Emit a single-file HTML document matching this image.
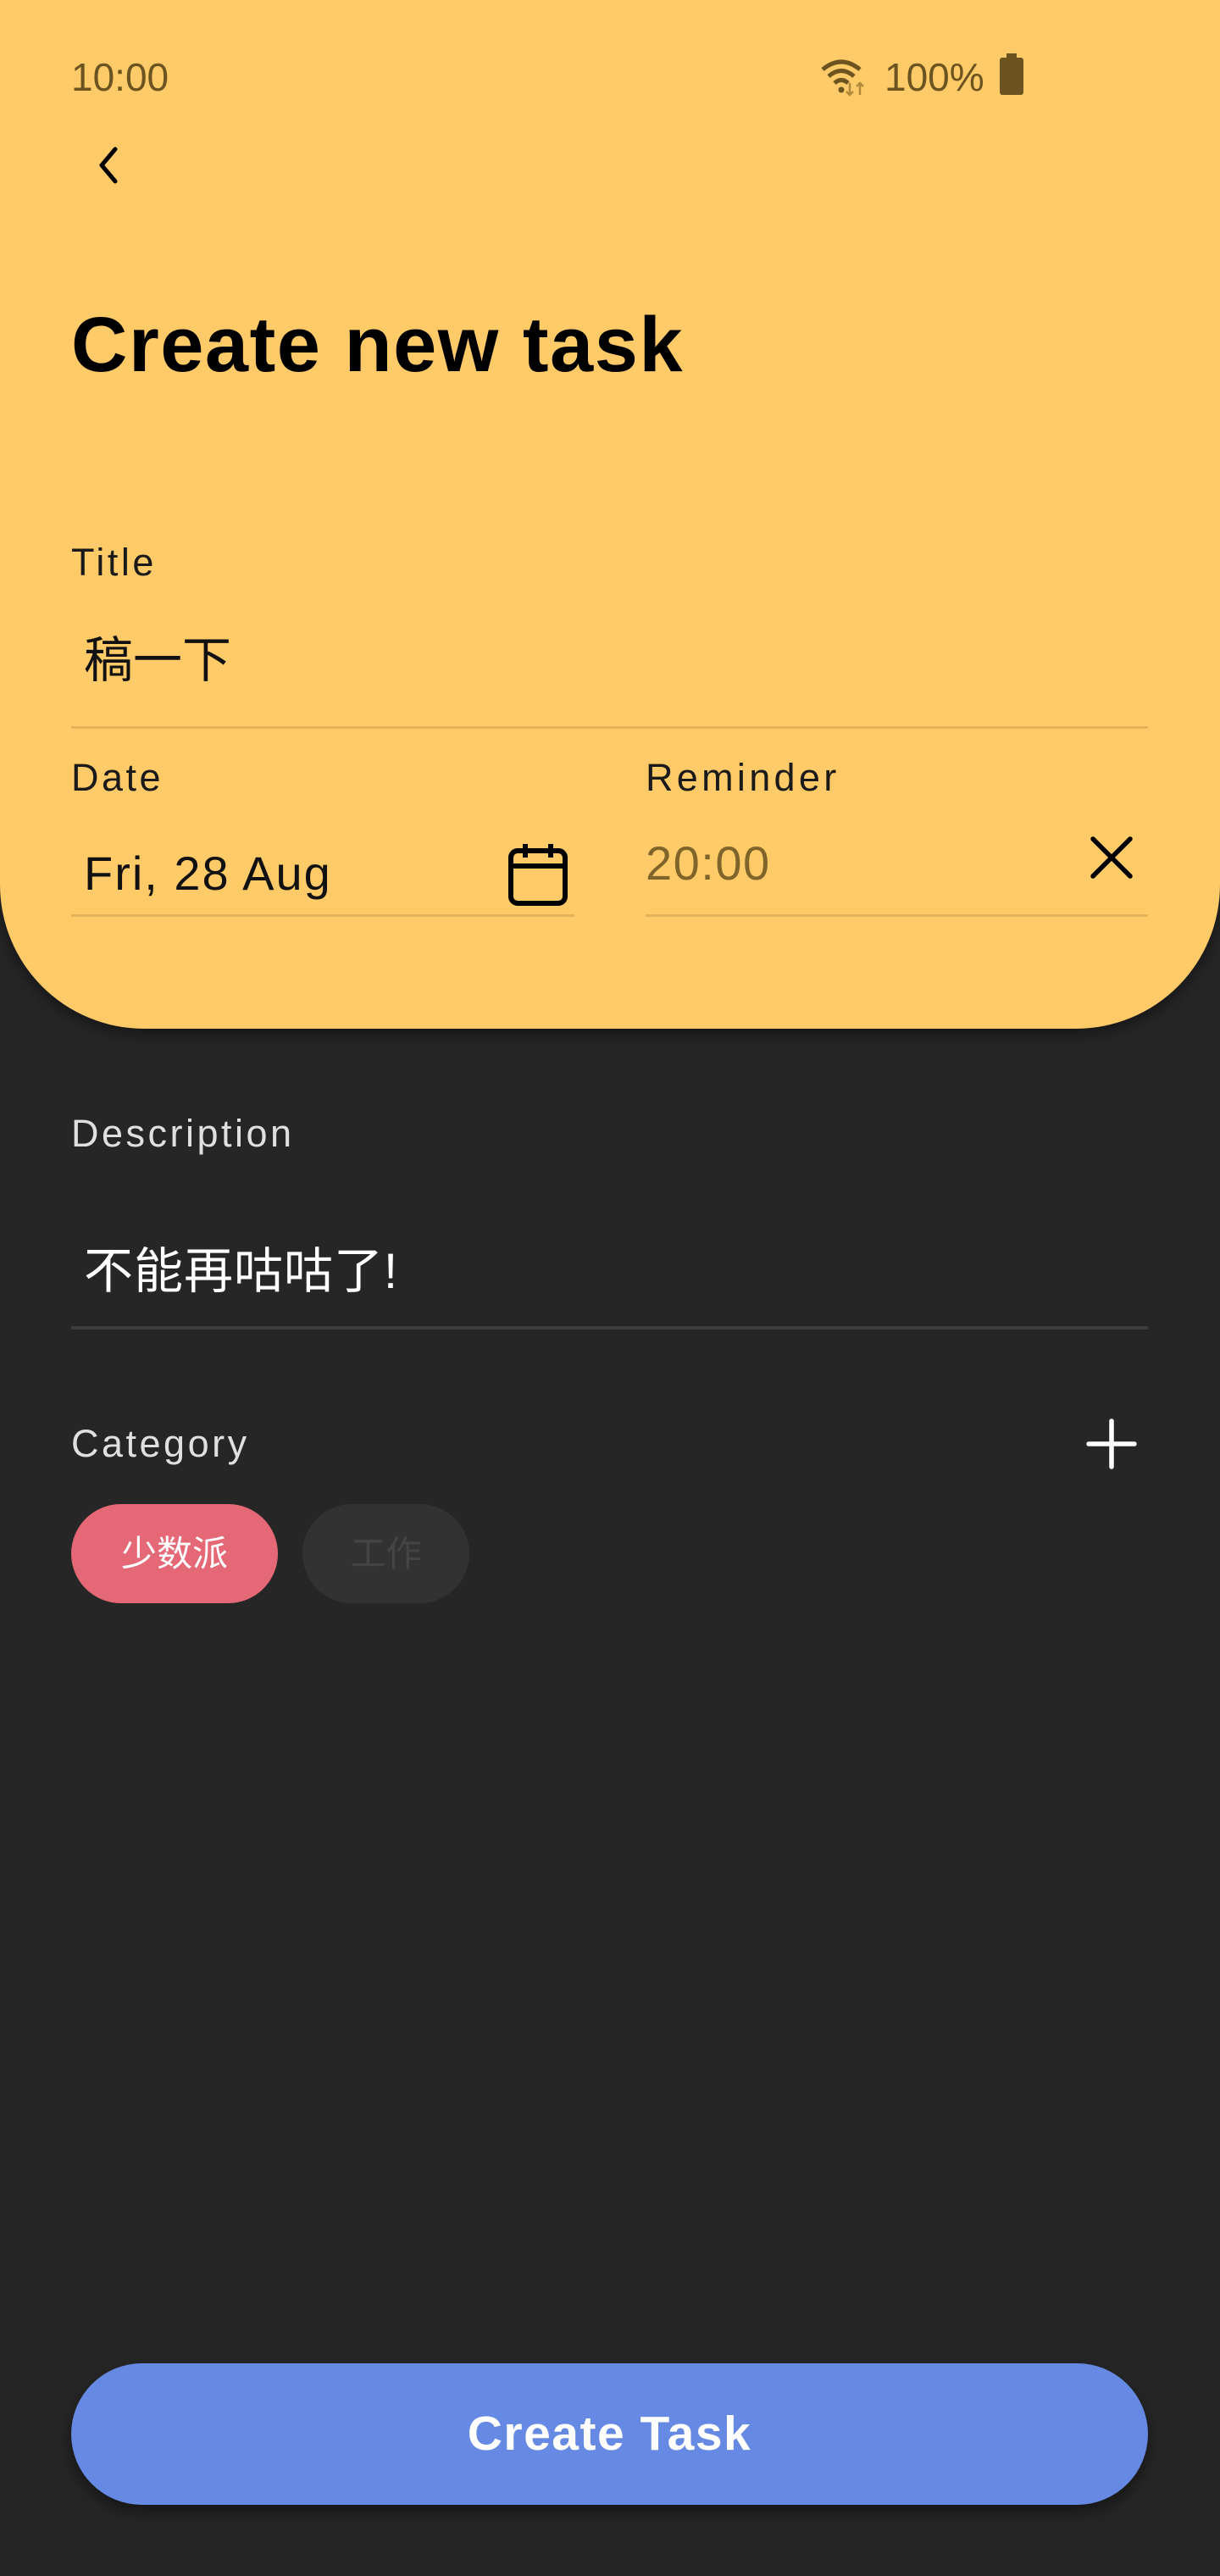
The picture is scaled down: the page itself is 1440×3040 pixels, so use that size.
<!DOCTYPE html>
<html><head><meta charset="utf-8"><style>
*{margin:0;padding:0;box-sizing:border-box}
body{width:1440px;height:3040px;background:#262626;font-family:"Liberation Sans","Noto Sans CJK SC",sans-serif;position:relative;overflow:hidden}
.a{position:absolute;white-space:nowrap}
.panel{position:absolute;left:0;top:0;width:1440px;height:1214px;background:#ffca68;border-radius:0 0 170px 170px;box-shadow:0 6px 18px rgba(0,0,0,.45)}
.line{position:absolute;height:3px;background:#e3b35c}
.lab{font-size:45px;letter-spacing:3.5px}
</style></head><body>
<div class="panel"></div>
<div class="a" style="left:84px;top:64px;font-size:46px;color:#6b5420">10:00</div>
<svg class="a" style="left:965px;top:66px" width="62" height="48" viewBox="0 0 62 48"><path d="M6 16 Q28 -2 50 16" stroke="#6b5420" stroke-width="5" fill="none"/><path d="M13 24 Q28 11 43 24" stroke="#6b5420" stroke-width="5" fill="none"/><path d="M20 32 Q28 25 36 32" stroke="#6b5420" stroke-width="5" fill="none"/><circle cx="28" cy="40" r="3.5" fill="#6b5420"/><path d="M38 32v14M34 42l4 4 4-4M50 46v-14M46 36l4-4 4 4" stroke="#b08a3a" stroke-width="2.5" fill="none"/></svg>
<div class="a" style="left:1044px;top:64px;font-size:46px;color:#6b5420">100%</div>
<div class="a" style="left:1180px;top:68px;width:28px;height:44px;background:#6b5420;border-radius:3px"></div>
<div class="a" style="left:1188px;top:63px;width:12px;height:6px;background:#6b5420"></div>
<svg class="a" style="left:108px;top:170px" width="40" height="50" viewBox="0 0 40 50"><path d="M28 6 L12 25 L28 44" stroke="#000" stroke-width="5" fill="none" stroke-linecap="round" stroke-linejoin="round"/></svg>
<div class="a" style="left:84px;top:355px;font-size:92px;font-weight:bold;color:#000;letter-spacing:1.5px">Create new task</div>
<div class="a lab" style="left:84px;top:638px;color:#1a1a1a">Title</div>
<div class="a" style="left:99px;top:732px;font-size:58px;color:#111">稿一下</div>
<div class="line" style="left:84px;top:857px;width:1271px"></div>
<div class="a lab" style="left:84px;top:892px;color:#1a1a1a">Date</div>
<div class="a lab" style="left:762px;top:892px;color:#1a1a1a;letter-spacing:4.3px">Reminder</div>
<div class="a" style="left:99px;top:998px;font-size:56px;color:#111;letter-spacing:2px">Fri, 28 Aug</div>
<svg class="a" style="left:598px;top:992px" width="74" height="80" viewBox="0 0 74 80"><rect x="5" y="12" width="64" height="62" rx="8" stroke="#000" stroke-width="6" fill="none"/><path d="M5 30h64M22 4v16M52 4v16" stroke="#000" stroke-width="6"/></svg>
<div class="a" style="left:762px;top:986px;font-size:56px;color:#80652a;letter-spacing:1.5px">20:00</div>
<svg class="a" style="left:1284px;top:984px" width="56" height="56" viewBox="0 0 56 56"><path d="M6 6L50 50M50 6L6 50" stroke="#000" stroke-width="5.5" stroke-linecap="round"/></svg>
<div class="line" style="left:84px;top:1079px;width:594px"></div>
<div class="line" style="left:762px;top:1079px;width:593px"></div>
<div class="a lab" style="left:84px;top:1312px;color:#e0e0e0">Description</div>
<div class="a" style="left:99px;top:1453px;font-size:58px;color:#fff;letter-spacing:1px">不能再咕咕了!</div>
<div class="a" style="left:84px;top:1565px;width:1271px;height:4px;background:#3d3d3d"></div>
<div class="a lab" style="left:84px;top:1678px;color:#e0e0e0">Category</div>
<svg class="a" style="left:1282px;top:1674px" width="60" height="60" viewBox="0 0 60 60"><path d="M30 3v54M3 30h54" stroke="#fff" stroke-width="5.5" stroke-linecap="round"/></svg>
<div class="a" style="left:84px;top:1775px;width:244px;height:117px;border-radius:59px;background:#e46875;color:#fff;font-size:42px;text-align:center;line-height:117px">少数派</div>
<div class="a" style="left:357px;top:1775px;width:197px;height:117px;border-radius:59px;background:#323232;color:#444;font-size:42px;text-align:center;line-height:117px">工作</div>
<div class="a" style="left:84px;top:2789px;width:1271px;height:167px;border-radius:84px;background:#6689e4;box-shadow:0 8px 18px rgba(0,0,0,.45);color:#fff;font-size:57px;font-weight:bold;text-align:center;line-height:167px;letter-spacing:1.5px">Create Task</div>
</body></html>
